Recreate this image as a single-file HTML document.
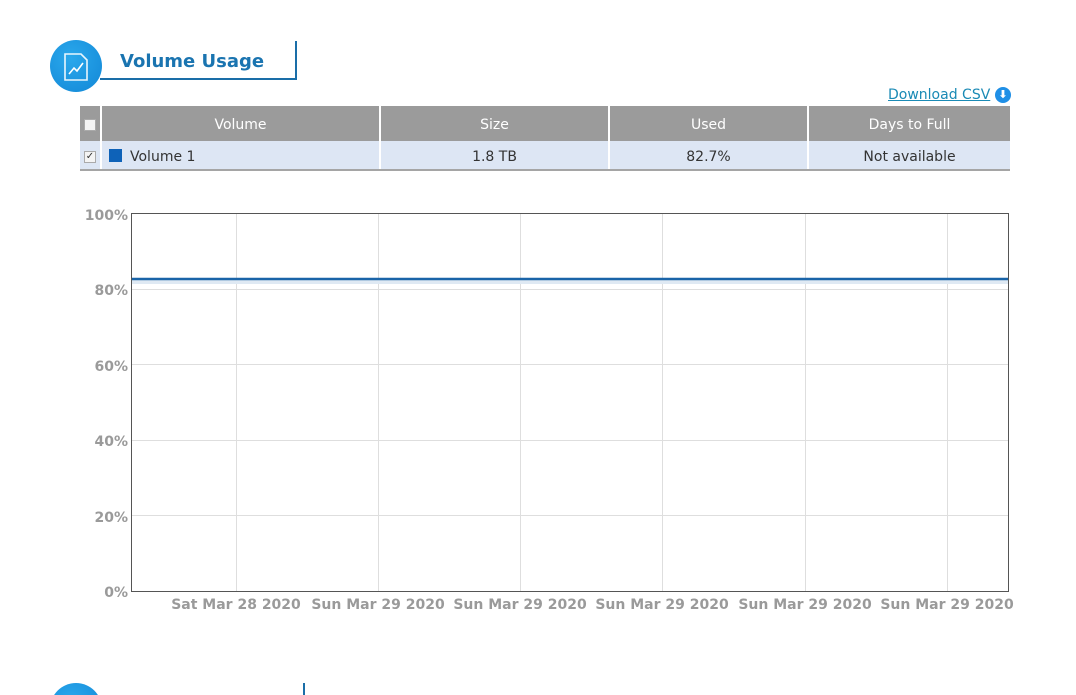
<!DOCTYPE html>
<html style="height:695px;overflow:hidden"><head><meta charset="utf-8"><style>
html,body{margin:0;width:1076px;height:695px;overflow:hidden;background:#fff}
body{font-family:"DejaVu Sans","Liberation Sans",sans-serif}
#w{position:relative;width:1076px;height:695px;overflow:hidden}
.abs{position:absolute}
.circle{position:absolute;width:52px;height:52px;border-radius:50%;background:radial-gradient(circle at 40% 35%,#2aa8ec,#1287d6)}
table{border-collapse:collapse;position:absolute;left:80px;top:106px;width:930px;font-size:14px;table-layout:fixed}
th{background:#9b9b9b;color:#fff;font-weight:normal;height:35px;border-left:2px solid #fff;padding:2px 0 0 0;box-sizing:border-box}
td{background:#dde6f4;color:#333;height:29px;border-left:2px solid #fff;padding:4px 0 0 0;text-align:center;border-bottom:2px solid #a5a5a5;box-sizing:border-box}
th:first-child,td:first-child{border-left:none}
.cb{display:inline-block;width:10px;height:10px;border:1px solid #aaa;background:#f4f4f4;vertical-align:middle}
</style></head><body><div id="w">
<div class="circle" style="left:50px;top:40px"></div>
<svg class="abs" style="left:62px;top:52px" width="30" height="30" viewBox="0 0 30 30"><path d="M3 2 H19 L25 8 V28 H3 Z" fill="none" stroke="#fff" stroke-width="1.6" opacity="0.9"/><path d="M7 22 L12 16 L15 19 L21 11" fill="none" stroke="#fff" stroke-width="1.6"/></svg>
<div class="abs" style="left:100px;top:78px;width:197px;height:2px;background:#1a6ea8"></div>
<div class="abs" style="left:295px;top:41px;width:2px;height:39px;background:#1a6ea8"></div>
<div class="abs" style="left:120px;top:51px;font-size:18px;font-weight:bold;color:#1a74b0">Volume Usage</div>
<div class="abs" style="left:888px;top:87px;font-size:14px;color:#1a8ab5;text-decoration:underline">Download CSV</div>
<div class="abs" style="left:995px;top:87px;width:16px;height:16px;border-radius:50%;background:#1f8fe6;color:#fff;font-size:11px;line-height:16px;text-align:center;font-weight:bold">⬇</div>
<table>
<colgroup><col style="width:21px"><col style="width:279px"><col style="width:229px"><col style="width:199px"><col style="width:202px"></colgroup>
<tr><th><span class="cb"></span></th><th>Volume</th><th>Size</th><th>Used</th><th>Days to Full</th></tr>
<tr><td><span class="cb" style="font-size:10px;line-height:10px;color:#333">✓</span></td><td style="text-align:left;padding-left:7px"><span style="display:inline-block;width:13px;height:13px;background:#0e62b8;vertical-align:-1px;margin-right:8px"></span>Volume 1</td><td>1.8 TB</td><td>82.7%</td><td>Not available</td></tr>
</table>
<svg class="abs" style="left:0;top:0" width="1076" height="695">
<g stroke="#dedede" stroke-width="1">
<line x1="131" y1="289.5" x2="1008" y2="289.5"/><line x1="131" y1="364.5" x2="1008" y2="364.5"/><line x1="131" y1="440.5" x2="1008" y2="440.5"/><line x1="131" y1="515.5" x2="1008" y2="515.5"/>
<line x1="236.5" y1="213" x2="236.5" y2="591"/><line x1="378.5" y1="213" x2="378.5" y2="591"/><line x1="520.5" y1="213" x2="520.5" y2="591"/><line x1="662.5" y1="213" x2="662.5" y2="591"/><line x1="805.5" y1="213" x2="805.5" y2="591"/><line x1="947.5" y1="213" x2="947.5" y2="591"/>
</g>
<rect x="131.5" y="213.5" width="877" height="378" fill="none" stroke="#555" stroke-width="1"/>
<rect x="132" y="280" width="876" height="4" fill="#dfe9f3"/>
<line x1="132" y1="279" x2="1008" y2="279" stroke="#1a64a8" stroke-width="2.5"/>
<g font-family="DejaVu Sans,sans-serif" font-size="14" font-weight="bold" fill="#9a9a9a">
<g text-anchor="end"><text x="128" y="220">100%</text><text x="128" y="295">80%</text><text x="128" y="371">60%</text><text x="128" y="446">40%</text><text x="128" y="522">20%</text><text x="128" y="597">0%</text></g>
<g text-anchor="middle"><text x="236" y="609">Sat Mar 28 2020</text><text x="378" y="609">Sun Mar 29 2020</text><text x="520" y="609">Sun Mar 29 2020</text><text x="662" y="609">Sun Mar 29 2020</text><text x="805" y="609">Sun Mar 29 2020</text><text x="947" y="609">Sun Mar 29 2020</text></g>
</g>
</svg>
<div class="circle" style="left:50px;top:683px"></div>
<div class="abs" style="left:303px;top:683px;width:2px;height:12px;background:#1a6ea8"></div>
</div></body></html>
